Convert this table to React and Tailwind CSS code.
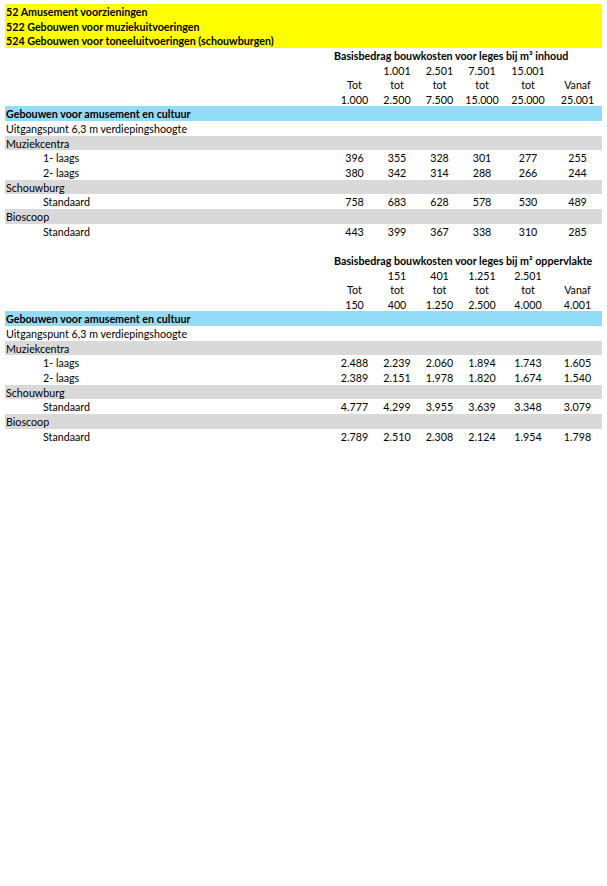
import React from "react"

const cols = "grid grid-cols-[328px_43px_42px_43px_42px_50px_49px]"

const m3 = {
  heading: "Basisbedrag bouwkosten voor leges bij m³ inhoud",
  top: ["", "1.001", "2.501", "7.501", "15.001", ""],
  mid: ["Tot", "tot", "tot", "tot", "tot", "Vanaf"],
  bottom: ["1.000", "2.500", "7.500", "15.000", "25.000", "25.001"],
  rows: {
    laag1: ["396", "355", "328", "301", "277", "255"],
    laag2: ["380", "342", "314", "288", "266", "244"],
    schouwburg: ["758", "683", "628", "578", "530", "489"],
    bioscoop: ["443", "399", "367", "338", "310", "285"],
  },
}

const m2 = {
  heading: "Basisbedrag bouwkosten voor leges bij m² oppervlakte",
  top: ["", "151", "401", "1.251", "2.501", ""],
  mid: ["Tot", "tot", "tot", "tot", "tot", "Vanaf"],
  bottom: ["150", "400", "1.250", "2.500", "4.000", "4.001"],
  rows: {
    laag1: ["2.488", "2.239", "2.060", "1.894", "1.743", "1.605"],
    laag2: ["2.389", "2.151", "1.978", "1.820", "1.674", "1.540"],
    schouwburg: ["4.777", "4.299", "3.955", "3.639", "3.348", "3.079"],
    bioscoop: ["2.789", "2.510", "2.308", "2.124", "1.954", "1.798"],
  },
}

function Row({ label, values, bg = "", bold = false, indent = false }) {
  return (
    <div className={`${cols} h-[14.65px] leading-[16px] ${bg} ${bold ? "font-bold" : ""}`}>
      <div className={`whitespace-nowrap ${indent ? "pl-[38px]" : "pl-[1px]"}`}>{label}</div>
      {(values || ["", "", "", "", "", ""]).map((v, i) => (
        <div key={i} className="text-center whitespace-nowrap">{v}</div>
      ))}
    </div>
  )
}

function Section({ data }) {
  return (
    <>
      <div className={`${cols} h-[14.65px] leading-[16px] font-bold`}>
        <div />
        <div className="col-span-6 whitespace-nowrap pl-[1px]">{data.heading}</div>
      </div>
      <Row values={data.top} />
      <Row values={data.mid} />
      <Row values={data.bottom} />
      <Row label="Gebouwen voor amusement en cultuur" bg="bg-[#93dcf7]" bold />
      <Row label="Uitgangspunt 6,3 m verdiepingshoogte" />
      <Row label="Muziekcentra" bg="bg-[#d9d9d9]" />
      <Row label="1- laags" values={data.rows.laag1} indent />
      <Row label="2- laags" values={data.rows.laag2} indent />
      <Row label="Schouwburg" bg="bg-[#d9d9d9]" />
      <Row label="Standaard" values={data.rows.schouwburg} indent />
      <Row label="Bioscoop" bg="bg-[#d9d9d9]" />
      <Row label="Standaard" values={data.rows.bioscoop} indent />
    </>
  )
}

export default function App() {
  return (
    <div className="w-[607px] h-[886px] bg-white text-black text-[10.7px] font-['Lato',sans-serif]">
      <div className="pt-[4px] pl-[5px] w-[602px]">

        {/* TITEL */}
        <div className="bg-[#ffff00] font-bold">
          <Row label="52 Amusement voorzieningen" />
          <Row label="522 Gebouwen voor muziekuitvoeringen" />
          <Row label="524 Gebouwen voor toneeluitvoeringen (schouwburgen)" />
        </div>

        <Section data={m3} />
        <Row />
        <Section data={m2} />

      </div>
    </div>
  )
}
